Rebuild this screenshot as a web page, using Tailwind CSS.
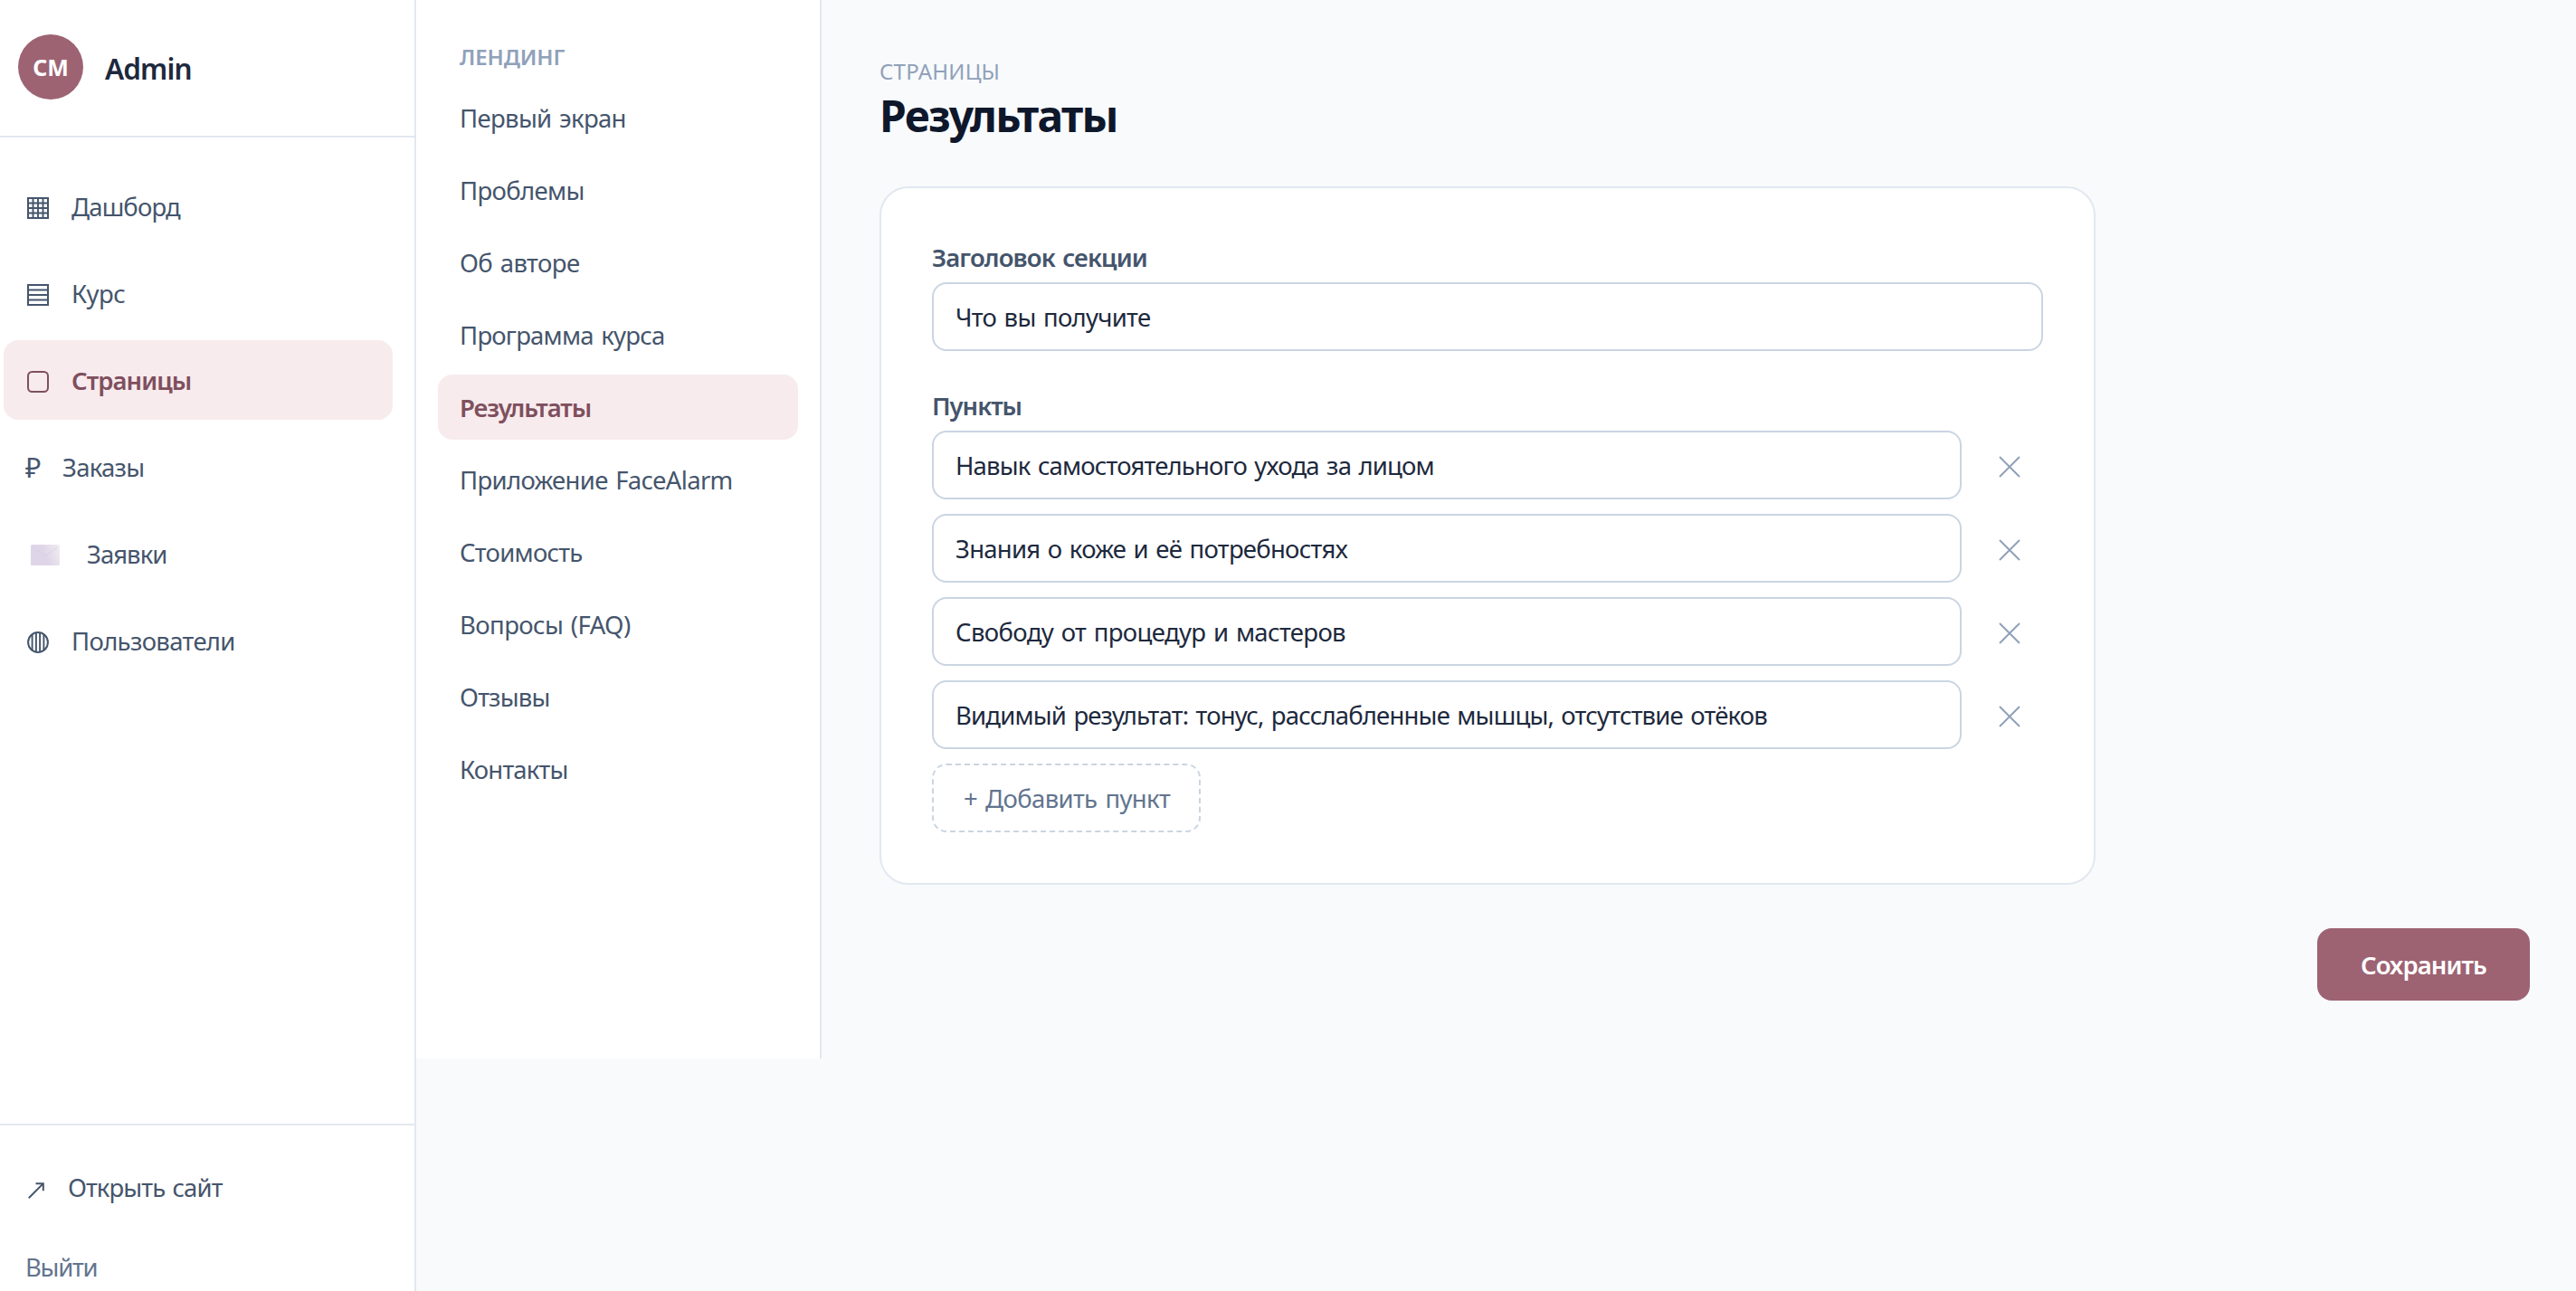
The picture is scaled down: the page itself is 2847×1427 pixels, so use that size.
<!DOCTYPE html>
<html lang="ru">
<head>
<meta charset="utf-8">
<title>Admin</title>
<script src="https://cdn.jsdelivr.net/npm/@tailwindcss/browser@4"></script>
</head>
<body class="flex h-[1427px] items-start overflow-hidden whitespace-nowrap bg-slate-50 font-['Noto_Sans','Open_Sans',sans-serif] text-[27.5px] text-slate-600 [word-spacing:2px]">
  <aside class="flex h-[1444px] w-[460px] shrink-0 flex-col border-r-2 border-slate-200 bg-white">
    <div class="flex h-[152px] shrink-0 items-start border-b-2 border-slate-200 pl-5 pt-[38px]">
      <div class="flex size-[72px] items-center justify-center rounded-full bg-[#9d6373] text-[25px] font-bold text-white"><span class="pt-[2px]">СМ</span></div>
      <div class="ml-6 pt-[2px] text-[31.5px] font-semibold leading-[72px] tracking-[-0.9px] text-slate-800">Admin</div>
    </div>
    <nav class="flex flex-1 flex-col gap-2 pl-1 pr-6 pt-8 leading-[89px]">
      <a class="flex h-[88px] items-center rounded-2xl pl-6 pt-px"><span class="flex w-[51px] items-center"><svg class="ml-[2px] mt-[2px] size-6" viewBox="0 0 24 24" fill="none" stroke="currentColor" stroke-width="2"><path d="M1 1h22v22H1z"/><path d="M6.5 1v22M12 1v22M17.5 1v22M1 6.5h22M1 12h22M1 17.5h22" stroke-width="1.9"/></svg></span><span class="tracking-[-0.85px]">Дашборд</span></a>
      <a class="flex h-[88px] items-center rounded-2xl pl-6 pt-px"><span class="flex w-[51px] items-center"><svg class="ml-[2px] mt-[2px] size-6" viewBox="0 0 24 24" fill="none" stroke="currentColor" stroke-width="2"><path d="M1 1h22v22H1z"/><path d="M1 6.5h22M1 12h22M1 17.5h22" stroke-width="1.8"/></svg></span><span class="tracking-[-0.5px]">Курс</span></a>
      <a class="flex h-[88px] items-center rounded-2xl bg-[#f7ebed] pl-6 pt-px font-semibold text-[#7f4f5e]"><span class="flex w-[51px] items-center"><svg class="ml-[2px] mt-[2px] size-6" viewBox="0 0 24 24" fill="none" stroke="currentColor" stroke-width="2"><rect x="1" y="1" width="22" height="22" rx="4.5"/></svg></span><span class="tracking-[-0.95px]">Страницы</span></a>
      <a class="flex h-[88px] items-center rounded-2xl pl-6 pt-px"><span class="w-[41px] text-[30px]">₽</span><span class="tracking-[-0.72px]">Заказы</span></a>
      <a class="flex h-[88px] items-center rounded-2xl pl-6 pt-px"><span class="flex w-[68px] items-center"><svg class="ml-[6px] mt-[2px] h-[23px] w-8" viewBox="0 0 32 23"><defs><linearGradient id="env" x1="0" y1="0.3" x2="1" y2="0"><stop offset="0.4" stop-color="#dfd5e8"/><stop offset="1" stop-color="#f1edf1"/></linearGradient></defs><rect width="32" height="23" rx="1.5" fill="url(#env)"/><path d="M3 3l11 8.5q2 1.3 4 0L29 3" fill="none" stroke="#d3cbdc" stroke-width="0.7"/><path d="M19 12l12 9" stroke="#e6deea" stroke-width="0.8"/></svg></span><span class="tracking-[-0.97px]">Заявки</span></a>
      <a class="flex h-[88px] items-center rounded-2xl pl-6 pt-px"><span class="flex w-[51px] items-center"><svg class="ml-[2px] mt-[3px] size-6" viewBox="0 0 24 24" fill="none" stroke="currentColor"><circle cx="12" cy="12" r="10.9" stroke-width="2"/><path d="M5.6 3.6v16.8M9.9 1.6v20.8M14.1 1.6v20.8M18.4 3.6v16.8" stroke-width="1.9"/></svg></span><span class="tracking-[-0.67px]">Пользователи</span></a>
    </nav>
    <div class="flex h-[202px] shrink-0 flex-col border-t-2 border-slate-200 pl-7 pt-6 leading-[89px]">
      <a class="flex h-[88px] items-center pt-px"><span class="flex w-[47px] items-center"><svg class="ml-[3px] mt-[6px] size-[18px]" viewBox="0 0 18 18" fill="none" stroke="currentColor" stroke-width="2"><path d="M0.8 17.2L16.6 1.4M8.5 1.2h8.3v8"/></svg></span><span class="tracking-[-0.92px]">Открыть сайт</span></a>
      <a class="flex h-[88px] items-center pt-px tracking-[-1.27px] text-slate-500">Выйти</a>
    </div>
  </aside>

  <aside class="flex h-[1170px] w-[448px] shrink-0 flex-col border-r-2 border-slate-200 bg-white px-6 pt-[47px]">
    <div class="mb-[15px] pl-6 text-[24px] font-semibold leading-8 tracking-[-0.1px] text-slate-400">ЛЕНДИНГ</div>
    <nav class="flex flex-col gap-2 leading-[73px]">
      <a class="h-[72px] rounded-2xl pl-6 tracking-[-0.66px]">Первый экран</a>
      <a class="h-[72px] rounded-2xl pl-6 tracking-[-0.65px]">Проблемы</a>
      <a class="h-[72px] rounded-2xl pl-6 tracking-[-0.58px]">Об авторе</a>
      <a class="h-[72px] rounded-2xl pl-6 tracking-[-0.78px]">Программа курса</a>
      <a class="h-[72px] rounded-2xl bg-[#f7ebed] pl-6 font-semibold tracking-[-1.05px] text-[#7f4f5e]">Результаты</a>
      <a class="h-[72px] rounded-2xl pl-6 tracking-[-0.68px]">Приложение FaceAlarm</a>
      <a class="h-[72px] rounded-2xl pl-6 tracking-[-0.75px]">Стоимость</a>
      <a class="h-[72px] rounded-2xl pl-6 tracking-[-0.58px]">Вопросы (FAQ)</a>
      <a class="h-[72px] rounded-2xl pl-6 tracking-[-0.8px]">Отзывы</a>
      <a class="h-[72px] rounded-2xl pl-6 tracking-[-0.82px]">Контакты</a>
    </nav>
  </aside>

  <main class="flex flex-1 flex-col pl-16 pr-[51px] pt-[63px]">
    <div class="text-[24px] leading-8 tracking-[0.22px] text-slate-400">СТРАНИЦЫ</div>
    <h1 class="mb-[45px] text-[48px] font-bold leading-[66px] tracking-[-1.68px] text-slate-900">Результаты</h1>
    <section class="flex w-[1344px] flex-col rounded-[32px] border-2 border-slate-200 bg-white p-14">
      <label class="mb-2 pt-px font-semibold leading-[39px] tracking-[-0.88px]">Заголовок секции</label>
      <div class="mb-10 h-[76px] rounded-2xl border-2 border-slate-300 pl-6 leading-[73px] tracking-[-0.72px] text-slate-800">Что вы получите</div>
      <label class="mb-2 pt-px font-semibold leading-[39px] tracking-[-1.05px]">Пункты</label>
      <div class="flex flex-col gap-4 leading-[73px] text-slate-800">
        <div class="flex items-center"><div class="h-[76px] w-[1138px] rounded-2xl border-2 border-slate-300 pl-6 tracking-[-0.83px]">Навык самостоятельного ухода за лицом</div><svg class="ml-[41px] mt-1 size-6 text-slate-400" viewBox="0 0 24 24" fill="none" stroke="currentColor" stroke-width="2"><path d="M1 1l22 22M23 1L1 23"/></svg></div>
        <div class="flex items-center"><div class="h-[76px] w-[1138px] rounded-2xl border-2 border-slate-300 pl-6 tracking-[-0.74px]">Знания о коже и её потребностях</div><svg class="ml-[41px] mt-1 size-6 text-slate-400" viewBox="0 0 24 24" fill="none" stroke="currentColor" stroke-width="2"><path d="M1 1l22 22M23 1L1 23"/></svg></div>
        <div class="flex items-center"><div class="h-[76px] w-[1138px] rounded-2xl border-2 border-slate-300 pl-6 tracking-[-0.64px]">Свободу от процедур и мастеров</div><svg class="ml-[41px] mt-1 size-6 text-slate-400" viewBox="0 0 24 24" fill="none" stroke="currentColor" stroke-width="2"><path d="M1 1l22 22M23 1L1 23"/></svg></div>
        <div class="flex items-center"><div class="h-[76px] w-[1138px] rounded-2xl border-2 border-slate-300 pl-6 tracking-[-0.82px]">Видимый результат: тонус, расслабленные мышцы, отсутствие отёков</div><svg class="ml-[41px] mt-1 size-6 text-slate-400" viewBox="0 0 24 24" fill="none" stroke="currentColor" stroke-width="2"><path d="M1 1l22 22M23 1L1 23"/></svg></div>
        <button class="h-[76px] w-[297px] rounded-2xl border-2 border-dashed border-slate-300 pl-[33px] text-left tracking-[-0.64px] text-slate-500 [word-spacing:2.5px]">+ Добавить пункт</button>
      </div>
    </section>
    <button class="mt-12 h-20 w-[235px] self-end rounded-2xl bg-[#9d6373] pt-px font-semibold leading-[79px] tracking-[-0.9px] text-white">Сохранить</button>
  </main>
</body>
</html>
